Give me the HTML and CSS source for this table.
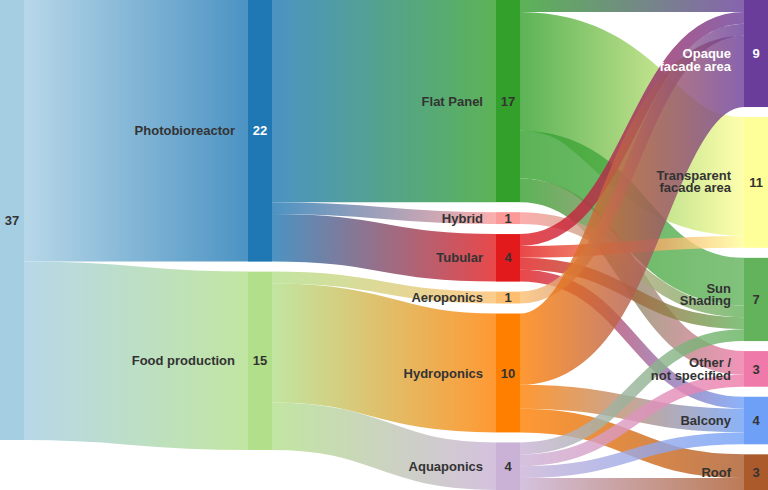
FILE: index.html
```html
<!DOCTYPE html>
<html lang="en">
<head>
<meta charset="utf-8">
<title>Sankey</title>
<link rel="stylesheet" href="styles.css">
</head>
<body>
<div class="chart">
  <svg id="sankey" class="sankey" width="768" height="490" viewBox="0 0 768 490">
    <defs id="grads"></defs>
    <g id="links" class="links"></g>
    <g id="nodes" class="nodes"></g>
    <g id="labels" class="labels"></g>
  </svg>
</div>
<script src="script.js"></script>
</body>
</html>
```

FILE: styles.css
```css
html, body {
  margin: 0;
  padding: 0;
  background: #ffffff;
  overflow: hidden;
}
.chart {
  width: 768px;
  height: 490px;
}
.sankey {
  display: block;
}
.link {
  fill: none;
  stroke-opacity: 0.8;
}
.label {
  font-family: "Liberation Sans", Arial, sans-serif;
  font-weight: 700;
  font-size: 13px;
  fill: #333333;
}
.label-end {
  text-anchor: end;
}
.value {
  text-anchor: middle;
}
.light {
  fill: #ffffff;
}
```

FILE: script.js
```js
(function () {
  var NS = 'http://www.w3.org/2000/svg';
  var K = 440 / 37, GAP = 10, W = 24;
  var COLX = [0, 248, 496, 744];

  var nodes = {
    n37:    { col: 0, v: 37, c: '#a6cee3', label: [] },
    photo:  { col: 1, v: 22, c: '#1f78b4', label: ['Photobioreactor'], lightVal: true },
    food:   { col: 1, v: 15, c: '#b2df8a', label: ['Food production'] },
    flat:   { col: 2, v: 17, c: '#33a02c', label: ['Flat Panel'] },
    hybrid: { col: 2, v: 1,  c: '#fb9a99', label: ['Hybrid'] },
    tub:    { col: 2, v: 4,  c: '#e31a1c', label: ['Tubular'] },
    aero:   { col: 2, v: 1,  c: '#fdbf6f', label: ['Aeroponics'] },
    hydro:  { col: 2, v: 10, c: '#ff7f00', label: ['Hydroponics'] },
    aqua:   { col: 2, v: 4,  c: '#cab2d6', label: ['Aquaponics'] },
    opaque: { col: 3, v: 9,  c: '#6a3d9a', label: ['Opaque', 'facade area'], dy: [0, 12.7], lightVal: true, lightLabel: true },
    transp: { col: 3, v: 11, c: '#ffff99', label: ['Transparent', 'facade area'], dy: [-7.4, 5] },
    sun:    { col: 3, v: 7,  c: '#63b35c', label: ['Sun', 'Shading'], dy: [-11, 1.3] },
    other:  { col: 3, v: 3,  c: '#ef79a8', label: ['Other /', 'not specified'], dy: [-6.5, 6] },
    balcony:{ col: 3, v: 4,  c: '#6fa0f8', label: ['Balcony'] },
    roof:   { col: 3, v: 3,  c: '#ab5a2c', label: ['Roof'] }
  };

  var linkData = [
    ['n37', 'photo', 22], ['n37', 'food', 15],
    ['photo', 'flat', 17], ['photo', 'hybrid', 1], ['photo', 'tub', 4],
    ['food', 'aero', 1], ['food', 'hydro', 10], ['food', 'aqua', 4],
    ['flat', 'opaque', 1], ['flat', 'transp', 10], ['flat', 'sun', 4], ['flat', 'other', 2],
    ['hybrid', 'sun', 1],
    ['tub', 'opaque', 1], ['tub', 'transp', 1], ['tub', 'sun', 1], ['tub', 'balcony', 1],
    ['aero', 'opaque', 1],
    ['hydro', 'opaque', 6], ['hydro', 'balcony', 2], ['hydro', 'roof', 2],
    ['aqua', 'sun', 1], ['aqua', 'other', 1], ['aqua', 'balcony', 1], ['aqua', 'roof', 1]
  ];

  function el(tag, attrs, parent) {
    var e = document.createElementNS(NS, tag);
    for (var k in attrs) e.setAttribute(k, attrs[k]);
    parent.appendChild(e);
    return e;
  }

  var cursor = [0, 0, 0, 0];
  Object.keys(nodes).forEach(function (id) {
    var n = nodes[id];
    n.x = COLX[n.col];
    n.y0 = cursor[n.col];
    n.y1 = n.y0 + n.v * K;
    cursor[n.col] = n.y1 + GAP;
  });

  var links = linkData.map(function (d) {
    return { s: d[0], t: d[1], v: d[2], w: d[2] * K };
  });

  Object.keys(nodes).forEach(function (id) {
    var n = nodes[id];
    var out = links.filter(function (l) { return l.s === id; })
      .sort(function (a, b) { return nodes[a.t].y0 - nodes[b.t].y0; });
    var y = n.y0;
    out.forEach(function (l) { l.sy = y + l.w / 2; y += l.w; });
    var inc = links.filter(function (l) { return l.t === id; })
      .sort(function (a, b) { return nodes[a.s].y0 - nodes[b.s].y0; });
    y = n.y0;
    inc.forEach(function (l) { l.ty = y + l.w / 2; y += l.w; });
  });

  var defs = document.getElementById('grads');
  var gLinks = document.getElementById('links');
  var gNodes = document.getElementById('nodes');
  var gLabels = document.getElementById('labels');

  links.forEach(function (l, i) {
    var s = nodes[l.s], t = nodes[l.t];
    var x0 = s.x + W, x1 = t.x, xm = (x0 + x1) / 2;
    var gid = 'lg' + i;
    var grad = el('linearGradient', { id: gid, gradientUnits: 'userSpaceOnUse', x1: x0, y1: 0, x2: x1, y2: 0 }, defs);
    el('stop', { offset: '0', 'stop-color': s.c }, grad);
    el('stop', { offset: '1', 'stop-color': t.c }, grad);
    var d = 'M' + x0 + ',' + l.sy +
      ' C' + xm + ',' + l.sy + ' ' + xm + ',' + l.ty + ' ' + x1 + ',' + l.ty;
    el('path', { 'class': 'link', d: d, stroke: 'url(#' + gid + ')', 'stroke-width': l.w }, gLinks);
  });

  Object.keys(nodes).forEach(function (id) {
    var n = nodes[id];
    el('rect', { 'class': 'node', x: n.x, y: n.y0, width: W, height: n.y1 - n.y0, fill: n.c }, gNodes);
    var yc = (n.y0 + n.y1) / 2;
    if (n.label.length) {
      var t = el('text', {
        'class': 'label label-end' + (n.lightLabel ? ' light' : ''),
        x: n.x - 13, y: yc
      }, gLabels);
      n.label.forEach(function (line, i) {
        var off = n.dy ? n.dy[i] : 0;
        var ts = el('tspan', { x: n.x - 13, y: (yc + off + 4.6).toFixed(2) }, t);
        ts.textContent = line;
      });
    }
    var v = el('text', {
      'class': 'label value' + (n.lightVal ? ' light' : ''),
      x: n.x + W / 2, y: (yc + 4.6).toFixed(2)
    }, gLabels);
    v.textContent = String(n.v);
  });
})();
```
